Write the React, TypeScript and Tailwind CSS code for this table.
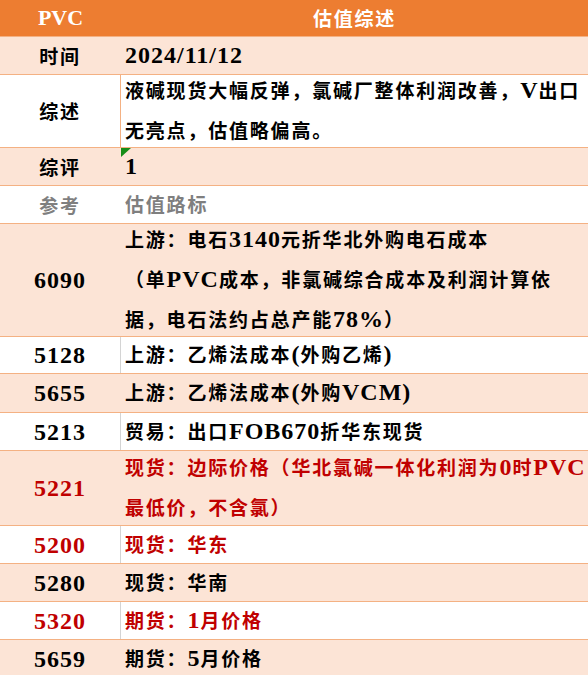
import React from "react";

type Row = {
  left: string;
  lines: string[];
  bg: "peach" | "white";
  h: string;
  color?: string;
  sep?: "grey" | "orange" | "none";
  flag?: boolean;
};

const rows: Row[] = [
  { left: "时间", lines: ["2024/11/12"], bg: "peach", h: "h-[38px]" },
  {
    left: "综述",
    lines: ["液碱现货大幅反弹，氯碱厂整体利润改善，V出口", "无亮点，估值略偏高。"],
    bg: "white",
    h: "h-[73px]",
    sep: "orange",
  },
  { left: "综评", lines: ["1"], bg: "peach", h: "h-[38px]", flag: true },
  { left: "参考", lines: ["估值路标"], bg: "white", h: "h-[38px]", color: "text-[#7f7f7f]", sep: "none" },
  {
    left: "6090",
    lines: [
      "上游：电石3140元折华北外购电石成本",
      "（单PVC成本，非氯碱综合成本及利润计算依",
      "据，电石法约占总产能78%）",
    ],
    bg: "peach",
    h: "h-[113px]",
  },
  { left: "5128", lines: ["上游：乙烯法成本(外购乙烯)"], bg: "white", h: "h-[37px]", sep: "grey" },
  { left: "5655", lines: ["上游：乙烯法成本(外购VCM)"], bg: "peach", h: "h-[39px]" },
  { left: "5213", lines: ["贸易：出口FOB670折华东现货"], bg: "white", h: "h-[38px]", sep: "grey" },
  {
    left: "5221",
    lines: ["现货：边际价格（华北氯碱一体化利润为0时PVC", "最低价，不含氯）"],
    bg: "peach",
    h: "h-[75px]",
    color: "text-[#c00000]",
  },
  { left: "5200", lines: ["现货：华东"], bg: "white", h: "h-[38px]", color: "text-[#c00000]", sep: "grey" },
  { left: "5280", lines: ["现货：华南"], bg: "peach", h: "h-[38px]" },
  { left: "5320", lines: ["期货：1月价格"], bg: "white", h: "h-[38px]", color: "text-[#c00000]", sep: "grey" },
  { left: "5659", lines: ["期货：5月价格"], bg: "peach", h: "h-[38px]" },
];

// latin runs get the serif face, the rest goes to the CJK face
function Txt({ s }: { s: string }) {
  const parts = s.match(/[\x00-\x7F]+|[^\x00-\x7F]+/g) || [];
  return (
    <>
      {parts.map((p, i) =>
        /^[\x00-\x7F]/.test(p) ? (
          <span key={i} className="font-['Liberation_Serif',serif] text-[24px] tracking-[1px]">
            {p}
          </span>
        ) : (
          <span key={i} className="font-['Noto_Sans_CJK_SC',sans-serif] text-[19px] tracking-[1.8px]">
            {p}
          </span>
        )
      )}
    </>
  );
}

export default function App() {
  return (
    <div className="w-[588px] h-[675px] overflow-hidden bg-white font-bold text-black">
      {/* Header */}
      <div className="flex h-[37px] bg-[#ed7d31] border-b border-[#f4b183] text-white leading-[36px]">
        <div className="w-[121px] flex items-center justify-center">
          <span className="font-['Liberation_Serif',serif] text-[22px]">PVC</span>
        </div>
        <div className="flex-1 flex items-center justify-center">
          <Txt s="估值综述" />
        </div>
      </div>

      {rows.map((r, i) => (
        <div
          key={i}
          className={`flex ${r.h} border-b border-[#f4b183] ${r.bg === "peach" ? "bg-[#fce4d6]" : "bg-white"} ${r.color || "text-black"}`}
        >
          <div
            className={`w-[121px] shrink-0 flex items-center justify-center leading-[38px] border-r ${
              r.sep === "grey" ? "border-[#d4d4d4]" : r.sep === "orange" ? "border-[#f4b183]" : "border-transparent"
            }`}
          >
            <Txt s={r.left} />
          </div>
          <div className="relative flex-1 flex flex-col justify-center pl-[4px] leading-[38px] whitespace-nowrap">
            {r.flag && (
              <svg className="absolute top-0 left-0" width="10" height="9" viewBox="0 0 10 9">
                <polygon points="0,0 10,0 0,9" fill="#168c16" />
              </svg>
            )}
            {r.lines.map((l, j) => (
              <div key={j}>
                <Txt s={l} />
              </div>
            ))}
          </div>
        </div>
      ))}
    </div>
  );
}
